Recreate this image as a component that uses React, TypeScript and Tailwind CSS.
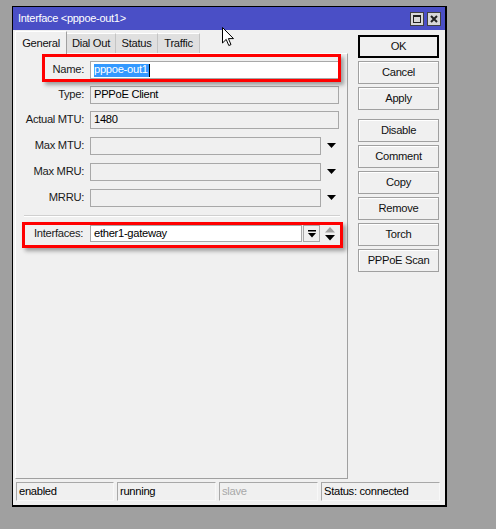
import React from "react";

const Arrow = () => (
  <svg width="9" height="6" viewBox="0 0 9 6" className="shrink-0">
    <polygon points="0,0 9,0 4.5,5" fill="#000" />
  </svg>
);

function Row({
  label,
  mt,
  children,
}: {
  label: string;
  mt: string;
  children: React.ReactNode;
}) {
  return (
    <div className={`flex items-center h-[18px] ${mt}`}>
      <div className="w-[68px] text-right text-[#1a1a1a] leading-none">{label}</div>
      <div className="ml-[6px] flex items-center">{children}</div>
    </div>
  );
}

const Field = ({ w, white, children }: { w: string; white?: boolean; children?: React.ReactNode }) => (
  <div
    className={`${w} h-[18px] border border-[#a8a8a8] ${white ? "bg-white" : "bg-[#f0f0f0]"} flex items-center pl-[3px] leading-none text-black`}
  >
    {children}
  </div>
);

const Btn = ({ label, def, mt }: { label: string; def?: boolean; mt?: string }) => (
  <div
    className={`w-[81px] h-[23px] flex items-center justify-center bg-[#f0f0f0] text-[#111] ${mt ?? ""} ${
      def
        ? "border-2 border-black"
        : "border border-[#a0a0a0] shadow-[inset_1px_1px_0_#ffffff]"
    }`}
  >
    {label}
  </div>
);

const Cell = ({ w, text, gray }: { w: string; text: string; gray?: boolean }) => (
  <div
    className={`${w} h-[19px] border border-[#a8a8a8] border-r-[#f8f8f8] border-b-[#f8f8f8] flex items-center pl-[2px] leading-none ${
      gray ? "text-[#a8a8a8]" : "text-black"
    }`}
  >
    {text}
  </div>
);

export default function App() {
  return (
    <div className="relative w-[496px] h-[529px] bg-[#a0a0a0] pt-[6px] pl-[12px] overflow-hidden font-['Liberation_Sans',Arial,sans-serif] text-[11.2px] tracking-[-0.3px]">
      <div className="w-[435px] h-[501px] border border-black border-r-2 border-b-2 bg-[#f0f0f0] flex flex-col">
        {/* title bar */}
        <div className="h-[23px] bg-[#4a4fc6] flex items-center justify-between pl-[5px] pr-[4px]">
          <span className="text-white text-[11px] tracking-[-0.3px] leading-none">
            Interface &lt;pppoe-out1&gt;
          </span>
          <div className="flex gap-[3px] mt-[1px]">
            <div className="w-[14px] h-[14px] bg-[#d8d8d8] border border-[#404040] flex items-center justify-center">
              <div className="w-[8px] h-[8px] border border-[#222] border-t-2" />
            </div>
            <div className="w-[14px] h-[14px] bg-[#d8d8d8] border border-[#404040] flex items-center justify-center">
              <svg width="8" height="8" viewBox="0 0 8 8">
                <path d="M1 1 L7 7 M7 1 L1 7" stroke="#222" strokeWidth="2" />
              </svg>
            </div>
          </div>
        </div>

        {/* body */}
        <div className="h-[449px] flex">
          <div className="pl-[2px] w-[335px] flex flex-col">
            {/* tabs */}
            <div className="h-[23px] flex items-end relative z-10">
              <div className="w-[52px] h-[23px] bg-[#f0f0f0] border-l border-t border-white border-r border-r-[#a0a0a0] flex items-center justify-center translate-y-[1px] text-[#111]">
                General
              </div>
              <div className="w-[49px] h-[20px] bg-[#e0e0e0] border-t border-r border-[#c4c4c4] border-t-white flex items-center justify-center text-[#111]">
                Dial Out
              </div>
              <div className="w-[42px] h-[20px] bg-[#e0e0e0] border-t border-r border-[#c4c4c4] border-t-white flex items-center justify-center text-[#111]">
                Status
              </div>
              <div className="w-[42px] h-[20px] bg-[#e0e0e0] border-t border-r border-[#c4c4c4] border-t-white flex items-center justify-center text-[#111]">
                Traffic
              </div>
            </div>
            {/* panel */}
            <div className="flex-1 border border-white border-r-[#a0a0a0] border-b-[#a0a0a0] flex flex-col pt-[7px]">
              <Row label="Name:" mt="">
                <Field w="w-[249px]" white>
                  <span className="bg-[#3399ff] text-white h-[13px] flex items-center pr-[1px]">pppoe-out1</span>
                  <span className="w-[1px] h-[13px] bg-black" />
                </Field>
              </Row>
              <Row label="Type:" mt="mt-[7px]">
                <Field w="w-[249px]">PPPoE Client</Field>
              </Row>
              <Row label="Actual MTU:" mt="mt-[7px]">
                <Field w="w-[249px]">1480</Field>
              </Row>
              <Row label="Max MTU:" mt="mt-[8px]">
                <Field w="w-[231px]" />
                <div className="ml-[6px]">
                  <Arrow />
                </div>
              </Row>
              <Row label="Max MRU:" mt="mt-[8px]">
                <Field w="w-[231px]" />
                <div className="ml-[6px]">
                  <Arrow />
                </div>
              </Row>
              <Row label="MRRU:" mt="mt-[8px]">
                <Field w="w-[231px]" />
                <div className="ml-[6px]">
                  <Arrow />
                </div>
              </Row>
              <div className="mt-[8px] ml-[8px] mr-[7px] h-[2px] border-t border-[#d0d0d0] border-b border-b-white" />
              <div className="mt-[8px] flex items-center h-[17px]">
                <div className="w-[67px] text-right text-[#1a1a1a] leading-none">Interfaces:</div>
                <div className="ml-[7px] w-[212px] h-[17px] bg-white border border-[#a8a8a8] flex items-center pl-[3px] leading-none text-black">
                  ether1-gateway
                </div>
                <div className="ml-[1px] w-[17px] h-[17px] border border-[#a8a8a8] bg-[#f0f0f0] flex items-center justify-center">
                  <svg width="8" height="8" viewBox="0 0 8 8">
                    <rect x="0" y="0" width="8" height="1.5" fill="#000" />
                    <polygon points="0,3 8,3 4,7.5" fill="#000" />
                  </svg>
                </div>
                <div className="ml-[5px]">
                  <svg width="10" height="14" viewBox="0 0 10 14">
                    <polygon points="5,0 10,5.5 0,5.5" fill="#a0a0a0" />
                    <polygon points="0,8 10,8 5,13.5" fill="#000" />
                  </svg>
                </div>
              </div>
            </div>
          </div>

          {/* buttons */}
          <div className="pl-[10px] pt-[5px] flex flex-col gap-[3px]">
            <Btn label="OK" def />
            <Btn label="Cancel" />
            <Btn label="Apply" />
            <Btn label="Disable" mt="mt-[6px]" />
            <Btn label="Comment" />
            <Btn label="Copy" />
            <Btn label="Remove" />
            <Btn label="Torch" />
            <Btn label="PPPoE Scan" />
          </div>
        </div>

        {/* status bar */}
        <div className="pt-[3px] pl-[3px] flex gap-[3px]">
          <Cell w="w-[98px]" text="enabled" />
          <Cell w="w-[99px]" text="running" />
          <Cell w="w-[99px]" text="slave" gray />
          <Cell w="w-[119px]" text="Status: connected" />
        </div>
      </div>

      {/* red annotation boxes */}
      <div className="absolute left-[42px] top-[54px] w-[299px] h-[28px] border-[3px] border-[#ff0000] shadow-[3px_3px_4px_rgba(0,0,0,0.35)] pointer-events-none" />
      <div className="absolute left-[22px] top-[222px] w-[321px] h-[26px] border-[3px] border-[#ff0000] shadow-[3px_3px_4px_rgba(0,0,0,0.35)] pointer-events-none" />

      {/* mouse cursor */}
      <svg className="absolute left-[222px] top-[27px]" width="13" height="20" viewBox="0 0 13 20">
        <path d="M0.5 0.5 L0.5 16 L4.2 12.4 L6.8 18.5 L9 17.6 L6.4 11.6 L11.5 11.6 Z" fill="#fff" stroke="#000" strokeWidth="1" strokeLinejoin="round" />
      </svg>
    </div>
  );
}
